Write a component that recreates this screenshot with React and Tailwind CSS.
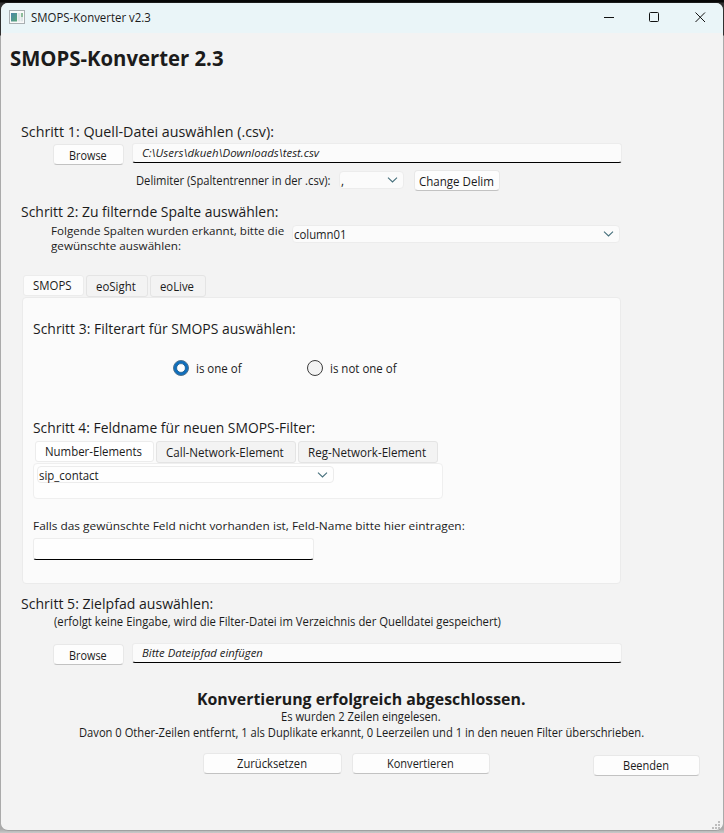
import { useLayoutEffect, useRef } from "react";

// Single-line text condensed or widened horizontally to fill its box.
function Fit({ className = "", children }) {
  const box = useRef(null);
  const text = useRef(null);
  useLayoutEffect(() => {
    const apply = () => {
      if (!box.current || !text.current) return;
      const ratio = box.current.clientWidth / text.current.offsetWidth;
      text.current.style.transform = `scaleX(${ratio})`;
    };
    apply();
    document.fonts?.ready.then(apply);
  }, []);
  return (
    <div ref={box} className={`shrink-0 whitespace-nowrap ${className}`}>
      <span ref={text} className="inline-block origin-left align-top">{children}</span>
    </div>
  );
}

function Button({ className, textClass, children }) {
  return (
    <button className={`flex h-[21px] shrink-0 flex-col items-center rounded-[4px] border border-b-[#c2c2c2] border-[#e8e8e8] bg-[#fdfdfd] pr-[2px] ${className}`}>
      <Fit className={`leading-[19px] ${textClass}`}>{children}</Fit>
    </button>
  );
}

function Chevron() {
  return (
    <svg width="11" height="6" viewBox="0 0 11 6" className="shrink-0" fill="none" stroke="#46707c" strokeWidth="1.1">
      <path d="M1 0.7 L5.5 4.9 L10 0.7" />
    </svg>
  );
}

function Combo({ className, textClass, children }) {
  return (
    <div className={`flex shrink-0 items-center justify-between rounded-[4px] border border-[#ececec] pr-[5px] ${className}`}>
      <Fit className={`pt-[2px] leading-4 ${textClass}`}>{children}</Fit>
      <Chevron />
    </div>
  );
}

function PathInput({ textClass, children }) {
  return (
    <div className="ml-2 h-5 w-[490px] shrink-0 rounded-[3px] border border-b-black border-[#ececec] bg-[#fbfbfb] pl-[9px]">
      <Fit className={`text-[11.5px] italic leading-[18px] ${textClass}`}>{children}</Fit>
    </div>
  );
}

function Tab({ active, className, textClass, children }) {
  return (
    <div className={`flex shrink-0 justify-center rounded-[3px] border pr-[2px] ${active ? "h-[21px] border-[#ececec]" : "h-[22px] border-[#e4e4e4] bg-[#f3f3f3]"} ${className}`}>
      <Fit className={`${active ? "leading-[19px]" : "leading-[21px]"} ${textClass}`}>{children}</Fit>
    </div>
  );
}

function TitleBar() {
  return (
    <div className="flex h-[30px] items-center bg-[#eaf5f8] pl-2">
      <svg width="16" height="14" viewBox="0 0 16 14" className="mb-[2px] shrink-0">
        <defs>
          <linearGradient id="app" x1="0" y1="0" x2="1" y2="1">
            <stop offset="0" stopColor="#4c86a8" />
            <stop offset="1" stopColor="#58a678" />
          </linearGradient>
        </defs>
        <rect x="0.5" y="0.5" width="15" height="13" fill="#fafafa" stroke="#a9afb2" />
        <rect x="2" y="3" width="6" height="8.5" fill="url(#app)" />
        <rect x="8.5" y="3" width="3" height="8.5" fill="#dfe6e8" />
        <rect x="12" y="3" width="2" height="4" fill="#8dbd9b" />
        <rect x="12" y="7" width="2" height="4.5" fill="#dfe6e8" />
      </svg>
      <Fit className="ml-[6px] w-[120px] leading-5">SMOPS-Konverter v2.3</Fit>
      <svg width="102" height="12" viewBox="0 0 102 12" className="mb-[2px] ml-auto mr-[17px] shrink-0" fill="none" stroke="#111" strokeWidth="1">
        <path d="M0 6.5H10" />
        <rect x="45.5" y="1.5" width="9" height="9" rx="1" />
        <path d="M91.5 1.5L101 11M101 1.5L91.5 11" />
      </svg>
    </div>
  );
}

export default function App() {
  return (
    <div className="h-[833px] w-[724px] bg-[linear-gradient(#070707_0px,#070707_2px,#303030_3px,#303030_35px,#aaaaaa_36px,#aaaaaa_829px,#c9c9c9_833px)] px-px pt-[3px] font-['Open_Sans','Noto_Sans',sans-serif] text-[12px] text-[#1b1b1b]">
      <div className="flex h-[828px] w-[722px] flex-col overflow-hidden rounded-[7px] border-b border-[#a0a0a0] bg-[#f3f3f3]">
        <TitleBar />

        <Fit className="ml-[9px] mt-[11px] h-7 w-[214px] text-[20.5px] font-bold leading-7">SMOPS-Konverter 2.3</Fit>

        <Fit className="ml-5 mt-[50px] h-5 w-[253px] text-[14px] leading-5">Schritt 1: Quell-Datei auswählen (.csv):</Fit>
        <div className="flex h-6 items-start pl-[52px] pt-px">
          <Button className="mt-px w-[71px]" textClass="w-[38px] pt-px">Browse</Button>
          <PathInput textClass="w-[177px]">C:\Users\dkueh\Downloads\test.csv</PathInput>
        </div>
        <div className="mt-[3px] flex h-[21px] items-start pl-[135px] pt-px">
          <Fit className="mt-px w-[195px] leading-5">Delimiter (Spaltentrenner in der .csv):</Fit>
          <Combo className="ml-[8px] mt-px h-[18px] w-[65px] bg-[#fbfbfb]" textClass="ml-[1px] w-[3px]">,</Combo>
          <Button className="ml-[10px] w-[86px]" textClass="w-[75px] pt-px">Change Delim</Button>
        </div>

        <Fit className="ml-5 mt-3 h-5 w-[257px] text-[14px] leading-5">Schritt 2: Zu filternde Spalte auswählen:</Fit>
        <div className="flex h-9 items-start pl-[50px]">
          <div className="mt-px w-[241px] text-[11.5px] leading-[15px]">
            <Fit className="w-[233px]">Folgende Spalten wurden erkannt, bitte die</Fit>
            <Fit className="w-[130px]">gewünschte auswählen:</Fit>
          </div>
          <Combo className="mt-[3px] h-[18px] w-[328px] bg-[#fbfbfb]" textClass="ml-[1px] w-[53px]">column01</Combo>
        </div>

        <div className="mt-[17px] flex h-[22px] items-start pl-[22px]">
          <Tab active className="w-[61px] bg-[#fcfcfc]" textClass="w-[39px]">SMOPS</Tab>
          <Tab className="ml-[2px] w-[62px]" textClass="w-[40px]">eoSight</Tab>
          <Tab className="ml-[2px] w-[56px]" textClass="w-[34px]">eoLive</Tab>
        </div>
        <div className="ml-[21px] flex h-[287px] w-[599px] shrink-0 flex-col rounded-[4px] border border-[#ebebeb] bg-[#fbfbfb] pl-[10px]">
          <Fit className="mt-[21px] h-5 w-[263px] text-[14px] leading-5">Schritt 3: Filterart für SMOPS auswählen:</Fit>
          <div className="mt-[19px] flex h-5 items-center pl-[140px]">
            <svg width="16" height="16" viewBox="0 0 16 16" className="shrink-0">
              <circle cx="8" cy="8" r="7.5" fill="#0f6fbd" stroke="#53738c" />
              <circle cx="8" cy="8" r="4.4" fill="#fff" stroke="#1d5c8c" strokeWidth="0.8" />
            </svg>
            <Fit className="ml-[7px] w-[46px] pt-[2px] leading-5">is one of</Fit>
            <span className="ml-[65px] size-4 shrink-0 rounded-full border border-[#3c3c3c] bg-[#f3f3f3]" />
            <Fit className="ml-[7px] w-[67px] pt-[2px] leading-5">is not one of</Fit>
          </div>
          <Fit className="mt-10 h-5 w-[282px] text-[14px] leading-5">Schritt 4: Feldname für neuen SMOPS-Filter:</Fit>
          <div className="mt-[3px] flex h-[22px] items-start pl-[2px]">
            <Tab active className="w-[119px] bg-white" textClass="w-[97px]">Number-Elements</Tab>
            <Tab className="ml-[2px] w-[140px]" textClass="w-[118px]">Call-Network-Element</Tab>
            <Tab className="ml-[2px] w-[140px]" textClass="w-[118px]">Reg-Network-Element</Tab>
          </div>
          <div className="h-9 w-[410px] rounded-[4px] border border-[#efefef] bg-[#fefefe] pl-[3px] pt-[2px]">
            <Combo className="h-[17px] w-[297px] bg-[#fefefe]" textClass="ml-[1px] w-[60px]">sip_contact</Combo>
          </div>
          <Fit className="mt-[17px] h-5 w-[432px] text-[11.5px] leading-5">Falls das gewünschte Feld nicht vorhanden ist, Feld-Name bitte hier eintragen:</Fit>
          <div className="mt-[2px] h-[22px] w-[281px] rounded-[3px] border border-b-black border-[#ededed] bg-[#fefefe]" />
        </div>

        <Fit className="ml-5 mt-[11px] h-[17px] w-[192px] text-[14px] leading-[17px]">Schritt 5: Zielpfad auswählen:</Fit>
        <Fit className="ml-[53px] mt-[2px] h-4 w-[447px] leading-4">(erfolgt keine Eingabe, wird die Filter-Datei im Verzeichnis der Quelldatei gespeichert)</Fit>
        <div className="mt-[13px] flex h-[22px] items-start pl-[52px]">
          <Button className="mt-px w-[71px]" textClass="w-[38px] pt-px">Browse</Button>
          <PathInput textClass="w-[121px]">Bitte Dateipfad einfügen</PathInput>
        </div>

        <Fit className="ml-[196px] mt-[24px] h-5 w-[328px] text-[16.5px] font-bold leading-5">Konvertierung erfolgreich abgeschlossen.</Fit>
        <Fit className="ml-[280px] h-4 w-[160px] leading-4">Es wurden 2 Zeilen eingelesen.</Fit>
        <Fit className="ml-[78px] h-4 w-[565px] leading-4">Davon 0 Other-Zeilen entfernt, 1 als Duplikate erkannt, 0 Leerzeilen und 1 in den neuen Filter überschrieben.</Fit>
        <div className="mt-[12px] flex items-start pl-[202px]">
          <Button className="w-[139px]" textClass="w-[70px]">Zurücksetzen</Button>
          <Button className="ml-[10px] w-[138px]" textClass="w-[67px]">Konvertieren</Button>
          <Button className="ml-[103px] mt-[2px] w-[107px]" textClass="w-[46px]">Beenden</Button>
        </div>
        <svg width="9" height="9" viewBox="0 0 9 9" className="ml-auto mr-[2px] mt-auto shrink-0" fill="#bdbdbd">
          <path d="M6 0h2v2h-2zM3 3h2v2h-2zM6 3h2v2h-2zM0 6h2v2h-2zM3 6h2v2h-2zM6 6h2v2h-2z" />
        </svg>
      </div>
    </div>
  );
}
